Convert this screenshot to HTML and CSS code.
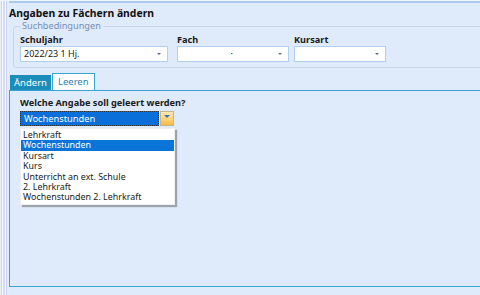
FILE: index.html
```html
<!DOCTYPE html>
<html lang="de">
<head>
	<meta charset="UTF-8">
	<title>Angaben zu Fächern ändern</title>
	<link rel="stylesheet" href="styles.css">
</head>
<body>
	<div class="window">
		<div class="edge"></div>
		<div class="main">
			<h1 class="title">Angaben zu Fächern ändern</h1>

			<!-- Suchbedingungen -->
			<fieldset class="group">
				<legend>Suchbedingungen</legend>
				<div class="fields">
					<div class="field f1">
						<label>Schuljahr</label>
						<div class="combo"><span>2022/23 1 Hj.</span><i class="arr"></i></div>
					</div>
					<div class="field f2">
						<label>Fach</label>
						<div class="combo"><span class="dot">·</span><i class="arr"></i></div>
					</div>
					<div class="field f3">
						<label>Kursart</label>
						<div class="combo"><span></span><i class="arr"></i></div>
					</div>
				</div>
			</fieldset>

			<!-- Reiter -->
			<div class="tabs">
				<span class="tab">Ändern</span>
				<span class="tab current">Leeren</span>
			</div>
			<div class="panel">
				<div class="question">Welche Angabe soll geleert werden?</div>
				<div class="select">
					<span class="value">Wochenstunden</span>
					<span class="btn"><i></i></span>
				</div>
				<ul class="list">
					<li>Lehrkraft</li>
					<li class="current">Wochenstunden</li>
					<li>Kursart</li>
					<li>Kurs</li>
					<li>Unterricht an ext. Schule</li>
					<li>2. Lehrkraft</li>
					<li>Wochenstunden 2. Lehrkraft</li>
				</ul>
			</div>
		</div>
	</div>
</body>
</html>
```

FILE: styles.css
```css
*{
	margin: 0;
	padding: 0;
	box-sizing: border-box;
	list-style-type: none;
}
body{
	width: 480px;
	height: 295px;
	overflow: hidden;
	background-color: #dfeafa;
	font-family: "Noto Sans", "Open Sans", sans-serif;
	font-size: 9px;
	color: #1a1a1a;
}
.window{
	display: flex;
	height: 295px;
	border-top: 1px solid #eef4fc;
}
.edge{
	width: 9px;
	flex: none;
	background: linear-gradient(to right, #e9effa 0 1px, #cdd6f0 1px 2px, #f5f8fe 2px 3px, #d6ddf3 3px 5px, #f5f8fe 5px 6px, #c9d2ee 6px 7px, #e4ecfa 7px 9px);
}
.main{
	flex: none;
	width: 490px;
	border-top: 2px solid #aacbea;
}
.title{
	font-size: 10.4px;
	font-weight: bold;
	line-height: 14px;
	margin: 3px 0 0 0;
	color: #111;
}
.group{
	margin: 0 0 0 4px;
	height: 48px;
	border: 1px solid #c9d6e6;
	border-radius: 3px;
	padding: 0 0 0 6px;
}
.group legend{
	padding: 0 2px;
	color: #7590b8;
	font-size: 9.2px;
	line-height: 12px;
}
.fields{
	display: flex;
	padding-top: 2px;
}
.field label{
	display: block;
	font-weight: bold;
	font-size: 9.2px;
	line-height: 11px;
	margin-bottom: 1px;
}
.f1{ width: 157px; }
.f2{ width: 117px; }
.f1 .combo{ width: 148px; }
.f2 .combo{ width: 112px; }
.f3 .combo{ width: 92px; }
.combo{
	display: flex;
	align-items: center;
	height: 16px;
	background-color: #fff;
	border: 1px solid #b2d0ec;
	padding: 0 6px 0 3px;
}
.combo span{
	flex: 1;
	line-height: 14px;
}
.combo .dot{
	text-align: right;
	padding-right: 45px;
}
.arr{
	width: 0;
	height: 0;
	border-left: 2px solid transparent;
	border-right: 2px solid transparent;
	border-top: 2px solid #5b6f8a;
}
.tabs{
	display: flex;
	align-items: flex-end;
	height: 19px;
	margin-top: 3px;
	padding-left: 1px;
}
.tab{
	height: 15px;
	line-height: 14px;
	padding: 0 3px;
	background-color: #1a8dbb;
	color: #fff;
	border: 1px solid #1a8dbb;
	border-bottom: none;
	font-size: 9.5px;
}
.tab.current{
	height: 17px;
	margin-left: 1px;
	padding: 1px 5px 0;
	background-color: #fff;
	color: #2f7fb6;
	border-color: #3ba3d3;
}
.panel{
	height: 197px;
	border: 1px solid #3ba3d3;
	border-right: none;
	padding: 6px 0 0 10px;
}
.question{
	font-weight: bold;
	line-height: 12px;
	margin-bottom: 2px;
	font-size: 9.2px;
}
.select{
	display: flex;
	width: 154px;
	height: 15px;
}
.select .value{
	flex: none;
	width: 139px;
	height: 15px;
	line-height: 13px;
	padding-left: 3px;
	background-color: #0a6fd8;
	color: #fff;
	border: 1px dotted #333;
	outline: 1px solid #0a6fd8;
	outline-offset: -2px;
	font-size: 9.3px;
}
.select .btn{
	display: flex;
	justify-content: center;
	width: 14px;
	height: 15px;
	margin-left: 1px;
	border: 1px solid #c9b48a;
	background: linear-gradient(#fbe7b4, #fcd47c 55%, #f7b845);
	padding-top: 3px;
}
.select .btn i{
	width: 0;
	height: 0;
	border-left: 3px solid transparent;
	border-right: 3px solid transparent;
	border-top: 3px solid #3e6fb3;
}
.list{
	width: 155px;
	margin-top: 2px;
	padding: 1px 0;
	background-color: #fff;
	box-shadow: 2px 2px 1px #9ea4ad;
	border: 1px solid #f0f0f0;
}
.list li{
	height: 10.4px;
	line-height: 10.4px;
	padding-left: 2px;
	white-space: nowrap;
	font-size: 8.9px;
}
.list li.current{
	background-color: #0a74d9;
	color: #fff;
}
```
